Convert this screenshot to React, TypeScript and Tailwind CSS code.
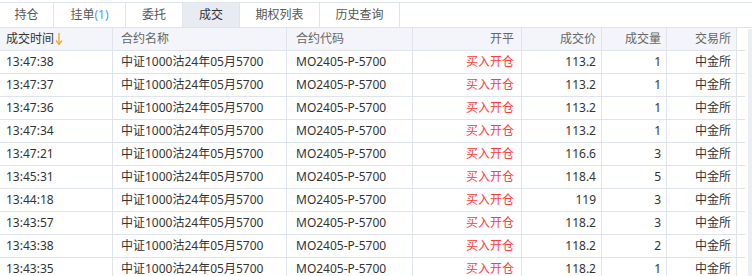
import React from "react";

const rows: [string, string, string][] = [
  ["13:47:38", "113.2", "1"],
  ["13:47:37", "113.2", "1"],
  ["13:47:36", "113.2", "1"],
  ["13:47:34", "113.2", "1"],
  ["13:47:21", "116.6", "3"],
  ["13:45:31", "118.4", "5"],
  ["13:44:18", "119", "3"],
  ["13:43:57", "118.2", "3"],
  ["13:43:38", "118.2", "2"],
  ["13:43:35", "118.2", "1"],
];

const tabs = [
  { label: "持仓", w: "w-[54px]" },
  { label: "挂单", w: "w-[72px]", badge: "(1)" },
  { label: "委托", w: "w-[57px]" },
  { label: "成交", w: "w-[57px]", active: true },
  { label: "期权列表", w: "w-[80px]" },
  { label: "历史查询", w: "w-[80px]" },
];

const grid = "grid grid-cols-[113px_174px_126px_109px_80px_65px_70px_8px]";

export default function App() {
  return (
    <div
      className="w-[752px] h-[276px] overflow-hidden bg-white text-[12px] text-[#333]"
      style={{ fontFamily: '"Noto Sans", "Noto Sans CJK SC", sans-serif' }}
    >
      <div className="pt-[2px]">
        <div className="flex h-[26px] border-y border-[#dfe3ec]">
          {tabs.map((t) => (
            <div
              key={t.label}
              className={`${t.w} flex items-center justify-center border-r border-[#dfe3ec] ${
                t.active ? "bg-[#e9ebf3] text-[#333]" : "text-[#555]"
              }`}
            >
              {t.label}
              {t.badge && <span className="text-[#4b9cf2]">{t.badge}</span>}
            </div>
          ))}
        </div>
      </div>
      <div className="flex">
        <div className="w-[745px]">
          <div className={`${grid} h-[23px] border-b border-[#dfe3ec] text-[#666]`}>
            <div className="bg-[#f3f5fa] border-r border-[#dfe3ec] pl-[6px] flex items-center text-[#333]">
              成交时间
              <svg width="8" height="14" viewBox="0 0 8 14" className="ml-[1px]">
                <line x1="4" y1="1" x2="4" y2="12" stroke="#f5a623" strokeWidth="1.3" />
                <path d="M1 8.5 L4 12.5 L7 8.5" fill="none" stroke="#f5a623" strokeWidth="1.3" />
              </svg>
            </div>
            <div className="bg-[#f3f5fa] border-r border-[#dfe3ec] pl-[8px] flex items-center">合约名称</div>
            <div className="bg-[#f3f5fa] border-r border-[#dfe3ec] pl-[9px] flex items-center">合约代码</div>
            <div className="bg-[#f3f5fa] border-r border-[#dfe3ec] pr-[7px] flex items-center justify-end">开平</div>
            <div className="bg-[#f3f5fa] border-r border-[#dfe3ec] pr-[5px] flex items-center justify-end">成交价</div>
            <div className="bg-[#f3f5fa] border-r border-[#dfe3ec] pr-[5px] flex items-center justify-end">成交量</div>
            <div className="bg-[#f3f5fa] border-r border-[#dfe3ec] pr-[5px] flex items-center justify-end">交易所</div>
            <div />
          </div>
          {rows.map(([time, price, qty]) => (
            <div key={time} className={`${grid} h-[23px] border-b border-[#dfe3ec]`}>
              <div className="border-r border-[#dfe3ec] pl-[6px] flex items-center">{time}</div>
              <div className="border-r border-[#dfe3ec] pl-[8px] flex items-center">中证1000沽24年05月5700</div>
              <div className="border-r border-[#dfe3ec] pl-[9px] flex items-center">MO2405-P-5700</div>
              <div className="border-r border-[#dfe3ec] pr-[7px] flex items-center justify-end text-[#ff3b3b]">买入开仓</div>
              <div className="border-r border-[#dfe3ec] pr-[5px] flex items-center justify-end">{price}</div>
              <div className="border-r border-[#dfe3ec] pr-[5px] flex items-center justify-end">{qty}</div>
              <div className="border-r border-[#dfe3ec] pr-[5px] flex items-center justify-end">中金所</div>
              <div />
            </div>
          ))}
        </div>
        <div className="w-[7px] pl-[3px] pt-[1px]">
          <div className="h-[260px] bg-[#eceef3]" />
        </div>
      </div>
    </div>
  );
}
